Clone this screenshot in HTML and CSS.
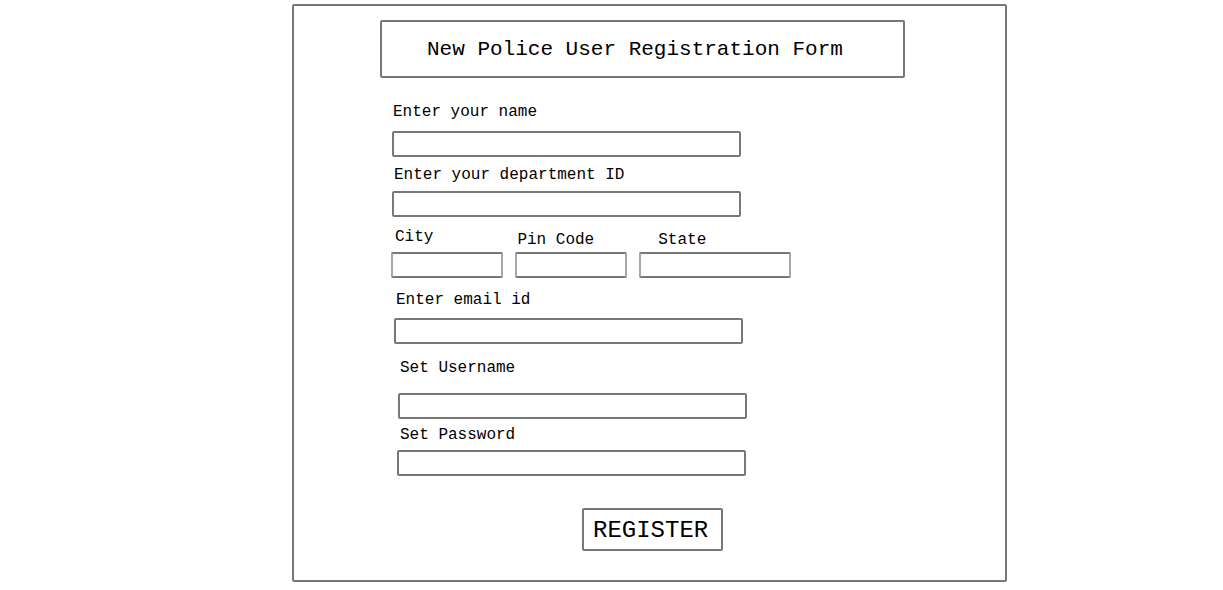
FILE: index.html
```html
<!DOCTYPE html>
<html lang="en">
<head>
<meta charset="utf-8">
<title>New Police User Registration Form</title>
<link rel="stylesheet" href="styles.css">
</head>
<body>
<div class="frame">
  <div class="title-box"><h1 class="title">New Police User Registration Form</h1></div>

  <label class="label lbl-name">Enter your name</label>
  <input class="field fld-name" type="text">

  <label class="label lbl-dept">Enter your department ID</label>
  <input class="field fld-dept" type="text">

  <div class="addr-labels">
    <span class="label lbl-city">City</span>
    <span class="label lbl-pin">Pin Code</span>
    <span class="label lbl-state">State</span>
  </div>
  <div class="addr-fields">
    <input class="field small fld-city" type="text">
    <input class="field small fld-pin" type="text">
    <input class="field small fld-state" type="text">
  </div>

  <label class="label lbl-email">Enter email id</label>
  <input class="field fld-email" type="text">

  <label class="label lbl-user">Set Username</label>
  <input class="field fld-user" type="text">

  <label class="label lbl-pass">Set Password</label>
  <input class="field fld-pass" type="password">

  <button class="register" type="button">REGISTER</button>
</div>
</body>
</html>
```
FILE: styles.css
```css
html, body {
  margin: 0;
  padding: 0;
  background: #ffffff;
}

body {
  font-family: "Liberation Mono", "DejaVu Sans Mono", monospace;
  color: #000;
}

.frame {
  box-sizing: border-box;
  margin: 4px 0 0 292px;
  width: 715px;
  height: 578px;
  border: 2px solid #787878;
  border-radius: 2px;
  display: flex;
  flex-direction: column;
  align-items: flex-start;
}

.title-box {
  box-sizing: border-box;
  margin: 14px 0 0 86px;
  width: 525px;
  height: 58px;
  border: 2px solid #787878;
  border-radius: 2px;
  display: flex;
  align-items: center;
  padding: 2px 0 0 45px;
}

.title {
  margin: 0;
  font-weight: normal;
  font-size: 21px;
  line-height: 24px;
  white-space: nowrap;
}

.label {
  display: block;
  font-size: 16px;
  line-height: 18px;
  white-space: nowrap;
}

.field {
  box-sizing: border-box;
  -webkit-appearance: none;
  appearance: none;
  display: block;
  margin: 0;
  padding: 0;
  width: 349px;
  height: 26px;
  border: 2px solid #787878;
  border-radius: 2px;
  background: #fff;
  outline: none;
}

.lbl-name { margin: 25px 0 0 99px; }
.fld-name { margin: 10px 0 0 98px; }

.lbl-dept { margin: 9px 0 0 100px; }
.fld-dept { margin: 7px 0 0 98px; }

.addr-labels {
  display: flex;
  align-items: flex-start;
  margin: 11px 0 0 0;
  height: 21px;
}
.lbl-city { margin-left: 101px; }
.lbl-pin { margin: 3px 0 0 84px; }
.lbl-state { margin: 3px 0 0 64px; }

.addr-fields {
  display: flex;
  margin: 3px 0 0 0;
}
.small {
  border-color: #787878 #a8a8a8 #787878 #a8a8a8;
}
.fld-city { margin-left: 97px; width: 112px; }
.fld-pin { margin-left: 12px; width: 112px; }
.fld-state { margin-left: 12px; width: 152px; }

.lbl-email { margin: 13px 0 0 102px; }
.fld-email { margin: 9px 0 0 100px; }

.lbl-user { margin: 15px 0 0 106px; }
.fld-user { margin: 16px 0 0 104px; }

.lbl-pass { margin: 7px 0 0 106px; }
.fld-pass { margin: 6px 0 0 103px; }

.register {
  box-sizing: border-box;
  margin: 32px 0 0 288px;
  width: 141px;
  height: 43px;
  padding: 2px 0 0 9px;
  border: 2px solid #787878;
  border-radius: 2px;
  background: #fff;
  font-family: "Liberation Mono", "DejaVu Sans Mono", monospace;
  font-size: 24px;
  line-height: 28px;
  color: #000;
  text-align: left;
  cursor: pointer;
}
```
